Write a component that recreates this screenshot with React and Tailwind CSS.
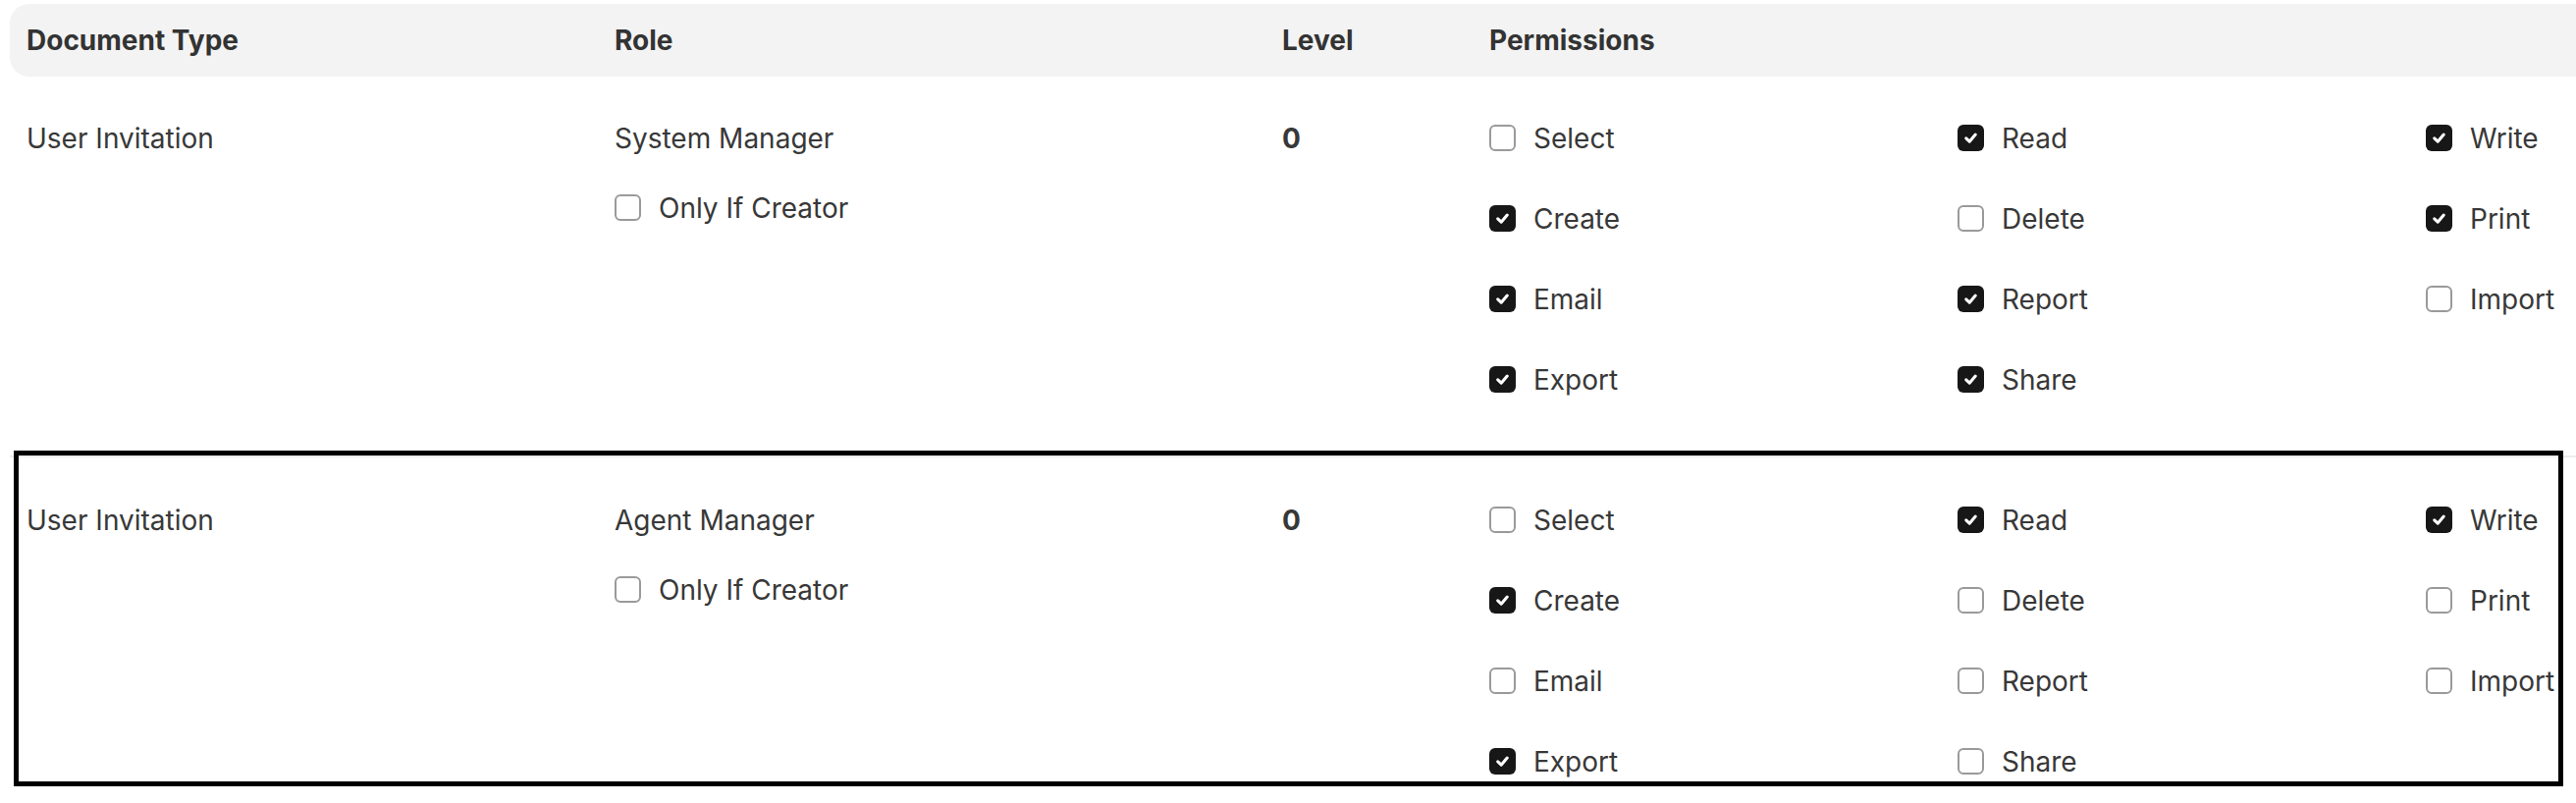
const rows = [
  {
    doctype: 'User Invitation',
    role: 'System Manager',
    level: 0,
    perms: {
      Select: false, Read: true, Write: true,
      Create: true, Delete: false, Print: true,
      Email: true, Report: true, Import: false,
      Export: true, Share: true,
    },
  },
  {
    doctype: 'User Invitation',
    role: 'Agent Manager',
    level: 0,
    highlighted: true,
    perms: {
      Select: false, Read: true, Write: true,
      Create: true, Delete: false, Print: false,
      Email: false, Report: false, Import: false,
      Export: true, Share: false,
    },
  },
]

const permOrder = ['Select', 'Read', 'Write', 'Create', 'Delete', 'Print', 'Email', 'Report', 'Import', 'Export', 'Share']

function Checkbox({ checked }) {
  if (checked) {
    return (
      <span className="flex h-[27px] w-[27px] shrink-0 items-center justify-center rounded-[6px] bg-[#171717]">
        <svg viewBox="0 0 16 16" className="h-[19px] w-[19px]" fill="none">
          <path d="M4 8.3 L6.9 11.1 L12 5.1" stroke="white" strokeWidth="2.6" strokeLinecap="round" strokeLinejoin="round" />
        </svg>
      </span>
    )
  }
  return <span className="h-[27px] w-[27px] shrink-0 rounded-[6px] border-[2px] border-[#9a9a9a] bg-white" />
}

function CheckItem({ label, checked }) {
  return (
    <div className="flex h-[41px] items-center gap-[18px]">
      <Checkbox checked={checked} />
      <span>{label}</span>
    </div>
  )
}

function PermissionRow({ row, first }) {
  return (
    <div
      className={
        first
          ? 'relative flex pl-[17px] pt-[42px] pb-[57px]'
          : 'relative flex border-t-[2px] border-[#ededed] pl-[17px] pt-[43px] pb-[57px]'
      }
    >
      <div className="w-[599px] shrink-0">
        <div className="flex h-[41px] items-center">{row.doctype}</div>
      </div>
      <div className="flex w-[680px] shrink-0 flex-col gap-[30px]">
        <div className="flex h-[41px] items-center">{row.role}</div>
        <CheckItem label="Only If Creator" checked={false} />
      </div>
      <div className="w-[211px] shrink-0">
        <div className="flex h-[41px] items-center font-bold">{row.level}</div>
      </div>
      <div className="grid flex-1 grid-cols-[477px_477px_1fr] gap-y-[41px]">
        {permOrder.map((p) => (
          <CheckItem key={p} label={p} checked={row.perms[p]} />
        ))}
      </div>
      {row.highlighted ? (
        <div className="pointer-events-none absolute -top-[7px] left-[4px] right-[13px] h-[342px] border-[5px] border-black" />
      ) : null}
    </div>
  )
}

export default function App() {
  return (
    <div
      className="min-h-screen w-full overflow-hidden bg-white text-[28px] text-[#383838]"
      style={{ fontFamily: 'Inter, "Noto Sans", sans-serif' }}
    >
      <div className="pl-[10px] pt-[4px]">
        <div className="flex h-[74px] items-center rounded-l-[20px] bg-[#f3f3f3] pl-[17px] font-bold text-[#333333]">
          <div className="w-[599px] shrink-0">Document Type</div>
          <div className="w-[680px] shrink-0">Role</div>
          <div className="w-[211px] shrink-0">Level</div>
          <div className="flex-1">Permissions</div>
        </div>
        {rows.map((row, i) => (
          <PermissionRow key={row.role} row={row} first={i === 0} />
        ))}
      </div>
    </div>
  )
}
